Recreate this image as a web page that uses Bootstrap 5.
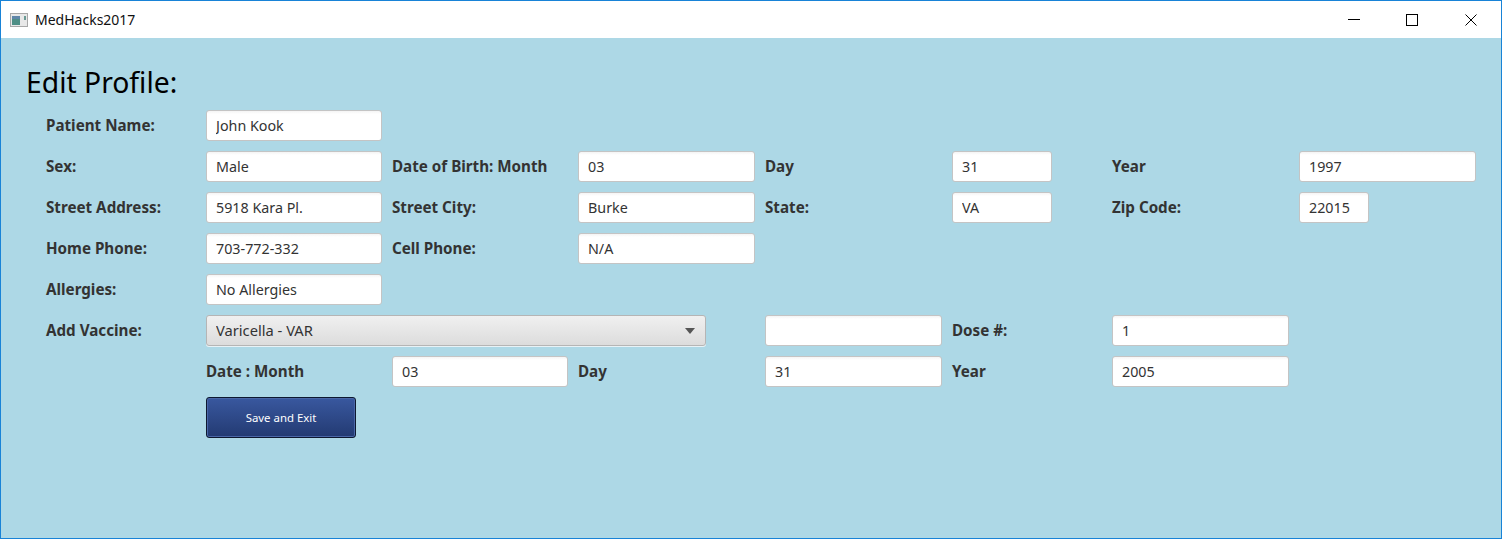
<!DOCTYPE html>
<html lang="en">
<head>
<meta charset="utf-8">
<title>MedHacks2017</title>
<link rel="stylesheet" href="https://cdn.jsdelivr.net/npm/bootstrap@5.3.0/dist/css/bootstrap.min.css">
<style>
html,body{height:100%;overflow:hidden;}
body{font-family:"Noto Sans","Open Sans",sans-serif;background:#add8e6;}
.app-window{width:1502px;height:539px;border:1px solid #1883d7;background:#add8e6;}
.title-bar{height:37px;background:#fff;color:#111;font-size:14px;padding-left:9px;flex:none;}
.win-btns{padding-right:1px;}
.win-btn{width:58.5px;height:37px;}
.title-icon{margin-right:-1px;}
.page-title{font-size:28.3px;line-height:40px;font-weight:400;color:#000;margin:24px 0 8px 25px;}
.form-area{display:grid;margin-left:45px;gap:10px;
 grid-template-columns:150px 176px 176px 177px 177px 150px 177px 177px;
 grid-template-rows:repeat(7,31px) 41px;}
.fld-label{font-weight:700;font-size:15.2px;color:#333;align-self:center;line-height:20px;white-space:nowrap;padding-bottom:2px;}
.fld-input.form-control{height:31px;min-height:31px;padding:0 9px 1px;font-size:14.3px;color:#333;border:1px solid #c4c4c4;border-radius:3px;background:linear-gradient(#f4f4f4 0,#fff 3px);box-shadow:none;font-family:inherit;}
.w-day{width:100px;}
.w-zip{width:70px;}
.combo.form-select{height:31px;width:500px;padding:0 9px;font-size:14.7px;color:#333;border:1px solid #b5b5b5;border-radius:3px;
 background-color:#e4e4e4;background-image:url("data:image/svg+xml,%3Csvg xmlns='http://www.w3.org/2000/svg' width='10' height='6'%3E%3Cpath d='M0 0h10L5 6z' fill='%23555'/%3E%3C/svg%3E"),linear-gradient(#f0f0f0,#dcdcdc);
 background-repeat:no-repeat;background-position:right 10px center,0 0;background-size:10px 6px,100% 100%;font-family:inherit;box-shadow:0 1px 0 #e8f2f6;}
.combo-span{grid-column:2 / span 3;}
.save-btn.btn{width:150px;height:41px;padding:0;font-size:11.4px;color:#fff;border:1px solid #0d1830;border-radius:3px;
 background:linear-gradient(#39589f,#233a72);box-shadow:inset 0 0 0 1px #4a67a8;}
.c2{grid-column:2;}.c3{grid-column:3;}.c4{grid-column:4;}.c5{grid-column:5;}.c6{grid-column:6;}.c7{grid-column:7;}.c8{grid-column:8;}
.r1{grid-row:1;}.r2{grid-row:2;}.r3{grid-row:3;}.r4{grid-row:4;}.r5{grid-row:5;}.r6{grid-row:6;}.r7{grid-row:7;}.r8{grid-row:8;}
</style>
</head>
<body class="m-0">
<div class="app-window d-flex flex-column">
  <header class="title-bar d-flex align-items-center justify-content-between">
    <div class="d-flex align-items-center gap-2">
      <svg class="title-icon" width="18" height="14" viewBox="0 0 18 14"><rect x=".5" y=".5" width="17" height="13" fill="#e8e8e8" stroke="#a8a8a8"/><rect x="2" y="3" width="8" height="9" fill="#4f8f86"/><rect x="2" y="3" width="8" height="3" fill="#5f86a8"/><rect x="14" y="3" width="2" height="4" fill="#6a9a94"/></svg>
      <span>MedHacks2017</span>
    </div>
    <div class="win-btns d-flex">
      <div class="win-btn d-flex align-items-center justify-content-center"><svg width="12" height="12" viewBox="0 0 12 12"><path d="M0 5.5h12" stroke="#000"/></svg></div>
      <div class="win-btn d-flex align-items-center justify-content-center"><svg width="12" height="12" viewBox="0 0 12 12"><rect x=".5" y=".5" width="11" height="11" fill="none" stroke="#000"/></svg></div>
      <div class="win-btn d-flex align-items-center justify-content-center"><svg width="12" height="12" viewBox="0 0 12 12"><path d="M.5.5l11 11M11.5.5l-11 11" stroke="#000" fill="none"/></svg></div>
    </div>
  </header>
  <main>
    <h1 class="page-title">Edit Profile:</h1>
    <form class="form-area">
      <label class="fld-label r1">Patient Name:</label>
      <input class="form-control fld-input c2 r1" value="John Kook">

      <label class="fld-label r2">Sex:</label>
      <input class="form-control fld-input c2 r2" value="Male">
      <label class="fld-label c3 r2">Date of Birth: Month</label>
      <input class="form-control fld-input c4 r2" value="03">
      <label class="fld-label c5 r2">Day</label>
      <input class="form-control fld-input w-day c6 r2" value="31">
      <label class="fld-label c7 r2">Year</label>
      <input class="form-control fld-input c8 r2" value="1997">

      <label class="fld-label r3">Street Address:</label>
      <input class="form-control fld-input c2 r3" value="5918 Kara Pl.">
      <label class="fld-label c3 r3">Street City:</label>
      <input class="form-control fld-input c4 r3" value="Burke">
      <label class="fld-label c5 r3">State:</label>
      <input class="form-control fld-input w-day c6 r3" value="VA">
      <label class="fld-label c7 r3">Zip Code:</label>
      <input class="form-control fld-input w-zip c8 r3" value="22015">

      <label class="fld-label r4">Home Phone:</label>
      <input class="form-control fld-input c2 r4" value="703-772-332">
      <label class="fld-label c3 r4">Cell Phone:</label>
      <input class="form-control fld-input c4 r4" value="N/A">

      <label class="fld-label r5">Allergies:</label>
      <input class="form-control fld-input c2 r5" value="No Allergies">

      <label class="fld-label r6">Add Vaccine:</label>
      <div class="combo-span r6">
        <select class="form-select combo"><option>Varicella - VAR</option></select>
      </div>
      <input class="form-control fld-input c5 r6" value="">
      <label class="fld-label c6 r6">Dose #:</label>
      <input class="form-control fld-input c7 r6" value="1">

      <label class="fld-label c2 r7">Date : Month</label>
      <input class="form-control fld-input c3 r7" value="03">
      <label class="fld-label c4 r7">Day</label>
      <input class="form-control fld-input c5 r7" value="31">
      <label class="fld-label c6 r7">Year</label>
      <input class="form-control fld-input c7 r7" value="2005">

      <div class="c2 r8"><button type="button" class="btn save-btn">Save and Exit</button></div>
    </form>
  </main>
</div>
<script src="https://cdn.jsdelivr.net/npm/bootstrap@5.3.0/dist/js/bootstrap.bundle.min.js"></script>
</body>
</html>
